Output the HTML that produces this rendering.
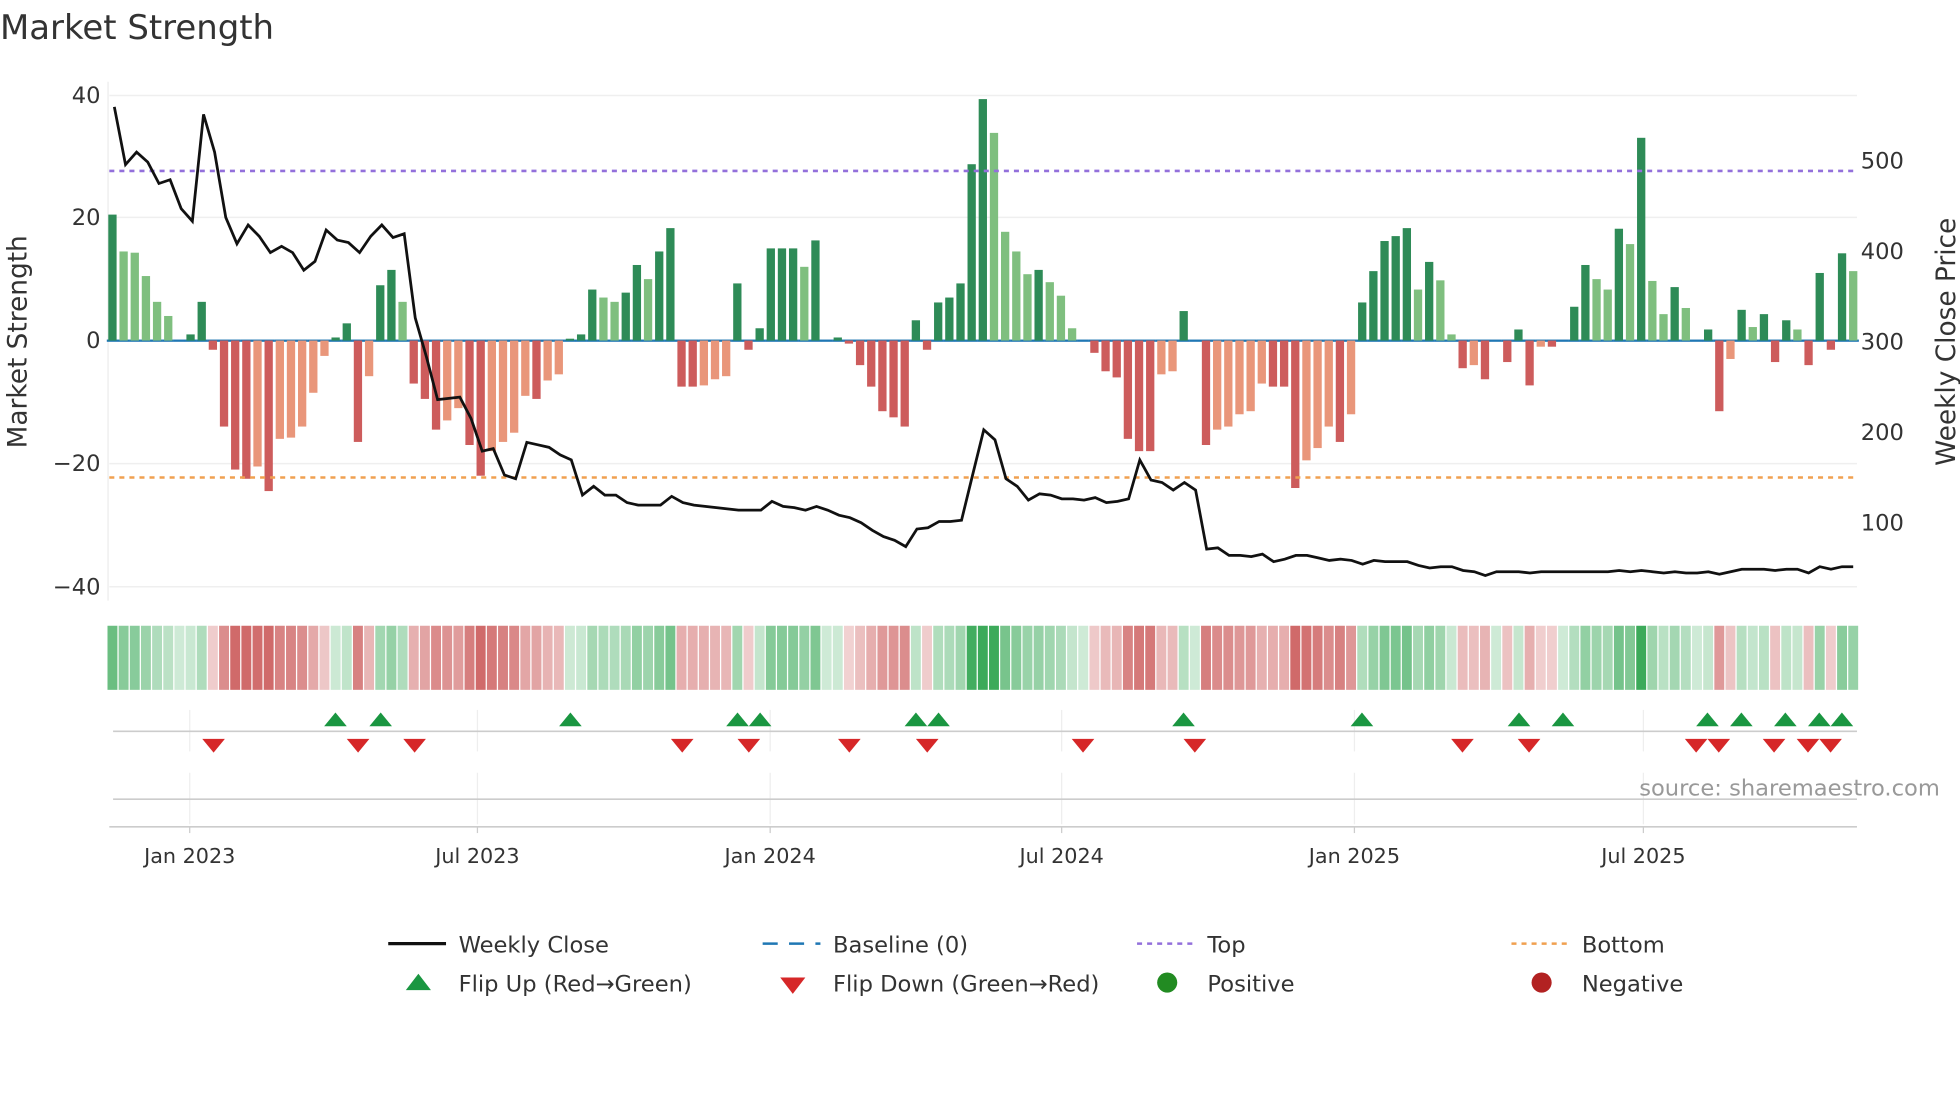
<!DOCTYPE html>
<html><head><meta charset="utf-8"><style>
html,body{margin:0;padding:0;background:#fff;width:1960px;height:1102px;overflow:hidden}
svg{display:block;font-family:"DejaVu Sans","Liberation Sans",sans-serif}
</style></head><body>
<svg id="s" width="1960" height="1102" viewBox="0 0 1560 877" xmlns="http://www.w3.org/2000/svg">
<text x="0" y="31" font-size="27" fill="#333">Market Strength</text>
<g stroke="#efefef" stroke-width="1.2">
<line x1="87" x2="1478" y1="76" y2="76"/><line x1="87" x2="1478" y1="173" y2="173"/>
<line x1="87" x2="1478" y1="369" y2="369"/><line x1="87" x2="1478" y1="467" y2="467"/>
<line x1="86" x2="86" y1="65" y2="478"/>
</g>
<g font-size="18" fill="#333">
<text x="80" y="82" text-anchor="end">40</text><text x="80" y="179" text-anchor="end">20</text>
<text x="80" y="277" text-anchor="end">0</text><text x="80" y="375" text-anchor="end">−20</text>
<text x="80" y="473" text-anchor="end">−40</text>
<text x="1481" y="134">500</text><text x="1481" y="206">400</text><text x="1481" y="278">300</text>
<text x="1481" y="350">200</text><text x="1481" y="422">100</text>
<text transform="translate(21,272) rotate(-90)" text-anchor="middle" font-size="21">Market Strength</text>
<text transform="translate(1556,272) rotate(-90)" text-anchor="middle" font-size="21">Weekly Close Price</text>
</g>
<g id="base"></g>
<g id="bars"></g>
<line x1="87" x2="1478" y1="136" y2="136" stroke="#9370db" stroke-width="2" stroke-dasharray="4,4"/>
<line x1="87" x2="1478" y1="380" y2="380" stroke="#f0a050" stroke-width="2" stroke-dasharray="4,4"/>
<polyline id="price" fill="none" stroke="#111" stroke-width="2.2"/>
<g id="heat"></g>
<g stroke="#eee" stroke-width="1">
<line x1="151" x2="151" y1="565" y2="598"/><line x1="380" x2="380" y1="565" y2="598"/><line x1="613" x2="613" y1="565" y2="598"/><line x1="845" x2="845" y1="565" y2="598"/><line x1="1078" x2="1078" y1="565" y2="598"/><line x1="1308" x2="1308" y1="565" y2="598"/>
<line x1="151" x2="151" y1="615" y2="656"/><line x1="380" x2="380" y1="615" y2="656"/><line x1="613" x2="613" y1="615" y2="656"/><line x1="845" x2="845" y1="615" y2="656"/><line x1="1078" x2="1078" y1="615" y2="656"/><line x1="1308" x2="1308" y1="615" y2="656"/>
</g>
<line x1="90" x2="1478" y1="582" y2="582" stroke="#ccc" stroke-width="1.3"/>
<line x1="90" x2="1478" y1="636" y2="636" stroke="#ccc" stroke-width="1.3"/>
<line x1="87" x2="1478" y1="658" y2="658" stroke="#ccc" stroke-width="1.3"/>
<g id="marks"></g>
<text x="1544" y="633" text-anchor="end" font-size="18" fill="#999">source: sharemaestro.com</text>
<g font-size="16.5" fill="#333" text-anchor="middle">
<text x="151" y="687">Jan 2023</text><text x="380" y="687">Jul 2023</text><text x="613" y="687">Jan 2024</text>
<text x="845" y="687">Jul 2024</text><text x="1078" y="687">Jan 2025</text><text x="1308" y="687">Jul 2025</text>
</g>
<g stroke="#ccc"><line x1="151" x2="151" y1="658" y2="663"/><line x1="380" x2="380" y1="658" y2="663"/><line x1="613" x2="613" y1="658" y2="663"/><line x1="845" x2="845" y1="658" y2="663"/><line x1="1078" x2="1078" y1="658" y2="663"/><line x1="1308" x2="1308" y1="658" y2="663"/></g>
<g font-size="18" fill="#333">
<line x1="309" x2="355" y1="751" y2="751" stroke="#111" stroke-width="2.5"/><text x="365" y="758">Weekly Close</text>
<line x1="607" x2="653" y1="751" y2="751" stroke="#1f77b4" stroke-width="2" stroke-dasharray="12,9"/><text x="663" y="758">Baseline (0)</text>
<line x1="905" x2="951" y1="751" y2="751" stroke="#9370db" stroke-width="2" stroke-dasharray="4,4"/><text x="961" y="758">Top</text>
<line x1="1203" x2="1249" y1="751" y2="751" stroke="#f0a050" stroke-width="2" stroke-dasharray="4,4"/><text x="1259" y="758">Bottom</text>
<polygon points="323,788 343,788 333,775" fill="#1a9641"/><text x="365" y="789">Flip Up (Red→Green)</text>
<polygon points="621,778 641,778 631,791" fill="#d62728"/><text x="663" y="789">Flip Down (Green→Red)</text>
<circle cx="929" cy="782" r="8" fill="#228b22"/><text x="961" y="789">Positive</text>
<circle cx="1227" cy="782" r="8" fill="#b22222"/><text x="1259" y="789">Negative</text>
</g>
</svg>
<script>
(function(){
var v=[20.5,14.5,14.3,10.5,6.3,4,0,1,6.3,-1.5,-14,-21,-22.5,-20.5,-24.5,-16,-15.8,-14,-8.5,-2.5,0.5,2.8,-16.5,-5.8,9,11.5,6.3,-7,-9.5,-14.5,-13,-11,-17,-22,-18,-16.5,-15,-9,-9.5,-6.5,-5.5,0.3,1,8.3,7,6.3,7.8,12.3,10,14.5,18.3,-7.5,-7.5,-7.3,-6.3,-5.8,9.3,-1.5,2,15,15,15,12,16.3,0,0.5,-0.5,-4,-7.5,-11.5,-12.5,-14,3.3,-1.5,6.2,7,9.3,28.7,39.3,33.8,17.7,14.5,10.8,11.5,9.5,7.3,2,0,-2,-5,-6,-16,-18,-18,-5.5,-5,4.8,0,-17,-14.5,-14,-12,-11.5,-7,-7.5,-7.5,-24,-19.5,-17.5,-14,-16.5,-12,6.2,11.3,16.2,17,18.3,8.3,12.8,9.8,1,-4.5,-4,-6.3,0,-3.5,1.8,-7.3,-1,-1,0,5.5,12.3,10,8.3,18.2,15.7,33,9.7,4.3,8.7,5.3,0,1.8,-11.5,-3,5,2.2,4.3,-3.5,3.3,1.8,-4,11,-1.5,14.2,11.3];
var n=v.length,x0=89.5,x1=1475,dx=(x1-x0)/(n-1),b='',h='',bs='';
for(var i=0;i<n;i++){var x=x0+i*dx,val=v[i],p=i?v[i-1]:0,c;
if(val>=0)c=(val>=p)?'#2e8b57':'#7fbf7f';else c=(val<=p)?'#cd5c5c':'#e9967a';
var yy=271-val*4.89,ty=Math.min(yy,271),ht=Math.abs(val*4.89);
bs+='<rect x="'+(x-4.5)+'" y="270.2" width="9" height="1.8" fill="#1f77b4"/>';
if(ht>0.3)b+='<rect x="'+(x-3.3)+'" y="'+ty+'" width="6.6" height="'+ht+'" fill="'+c+'"/>';
var hc=val>=0?'rgba(60,170,90,'+(0.25+Math.min(0.75,Math.abs(val)/40))+')':'rgba(200,80,80,'+(0.25+Math.min(0.6,Math.abs(val)/35))+')';
h+='<rect x="'+(x-dx/2+0.5)+'" y="498" width="'+(dx-1)+'" height="51" fill="'+hc+'"/>';}
document.getElementById('base').innerHTML=bs;
document.getElementById('bars').innerHTML=b;document.getElementById('heat').innerHTML=h;
var py=[85,131,121,129,146,143,166,176,91,121,173,194,179,188,201,196,201,215,208,183,191,193,201,188,179,189,186,253,284,318,317,316,333,359,357,378,381,352,354,356,362,366,394,387,394,394,400,402,402,402,395,400,402,403,404,405,406,406,406,399,403,404,406,403,406,410,412,416,422,427,430,435,421,420,415,415,414,378,342,350,381,387,398,393,394,397,397,398,396,400,399,397,366,382,384,390,384,390,437,436,442,442,443,441,447,445,442,442,444,446,445,446,449,446,447,447,447,450,452,451,451,454,455,458,455,455,455,456,455,455,455,455,455,455,455,454,455,454,455,456,455,456,456,455,457,455,453,453,453,454,453,453,456,451,453,451,451];
var pts=[];for(var i=0;i<py.length;i++){pts.push((91+i*(1475-91)/(py.length-1)).toFixed(1)+','+py[i]);}
document.getElementById('price').setAttribute('points',pts.join(' '));
var up=[267,303,454,587,605,729,747,942,1084,1209,1244,1359,1386,1421,1448,1466],dn=[170,285,330,543,596,676,738,862,951,1164,1217,1350,1368,1412,1439,1457],m='';
up.forEach(function(x){m+='<polygon points="'+(x-9)+',578 '+(x+9)+',578 '+x+',567" fill="#1a9641"/>';});
dn.forEach(function(x){m+='<polygon points="'+(x-9)+',588 '+(x+9)+',588 '+x+',599" fill="#d62728"/>';});
document.getElementById('marks').innerHTML=m;
})();
</script>
</body></html>
